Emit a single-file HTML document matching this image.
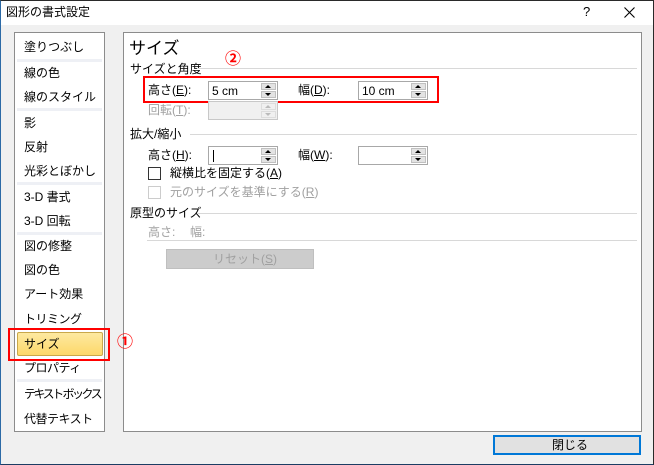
<!DOCTYPE html>
<html><head><meta charset="utf-8"><style>
*{margin:0;padding:0;box-sizing:border-box}
body{width:654px;height:465px;background:#f0f0f0;font-family:"Liberation Sans","Noto Sans CJK JP",sans-serif;font-size:12px;color:#000;position:relative;overflow:hidden}
.frame{position:absolute;left:0;top:0;width:654px;height:465px;border:1px solid #2a2a2a;border-left-color:#2c6aa6;border-bottom-color:#1c3d63}
.title{position:absolute;left:1px;top:1px;width:652px;height:24px;background:#fff}
.a{position:absolute;white-space:nowrap;line-height:14px}
.left{position:absolute;left:14px;top:32px;width:91px;height:400px;background:#fff;border:1px solid #8c8c8c}
.sep{position:absolute;left:2px;width:85px;height:3px;background:#eef0f5}
.right{position:absolute;left:123px;top:32px;width:519px;height:400px;background:#fff;border:1px solid #8c8c8c}
.line{position:absolute;height:1px;background:#d8d8d8}
.inp{position:absolute;width:70px;height:19px;border:1px solid #a8a8a8;background:#fff}
.inp.dis{background:#f0f0f0;border-color:#c8c8c8}
.spin{position:absolute;right:1px;top:1px;width:15px;height:15px}
.spin div{height:7px;background:#e3e3e3;border:1px solid #c0c0c0;margin-bottom:1px;position:relative}
.up:after{content:"";position:absolute;left:3px;top:1px;border-left:3.5px solid transparent;border-right:3.5px solid transparent;border-bottom:3px solid #000}
.dn:after{content:"";position:absolute;left:3px;top:1px;border-left:3.5px solid transparent;border-right:3.5px solid transparent;border-top:3px solid #000}
.dis .up:after{border-bottom-color:#bbb}.dis .dn:after{border-top-color:#bbb}
.dis .spin div{background:#f0f0f0;border-color:#ddd}
.g{color:#a0a0a0}
u{text-decoration:underline}
.red{color:#f00;font-weight:bold;z-index:5}
</style></head><body>
<div class="frame"></div>
<div class="title"></div>
<div class="a" style="left:6px;top:5px;font-size:12px">図形の書式設定</div>
<div class="a" style="left:583px;top:5px;font-size:13px">?</div>
<svg style="position:absolute;left:624px;top:7px" width="11" height="11"><path d="M0.5 0.5L10.5 10.5M10.5 0.5L0.5 10.5" stroke="#000" stroke-width="1.1"/></svg>

<div class="left">
<div class="a" style="left:9px;top:7px">塗りつぶし</div>
<div class="sep" style="top:26px"></div>
<div class="a" style="left:9px;top:33px">線の色</div>
<div class="a" style="left:9px;top:57px">線のスタイル</div>
<div class="sep" style="top:75px"></div>
<div class="a" style="left:9px;top:83px">影</div>
<div class="a" style="left:9px;top:107px">反射</div>
<div class="a" style="left:9px;top:131px">光彩とぼかし</div>
<div class="sep" style="top:149px"></div>
<div class="a" style="left:9px;top:157px">3-D 書式</div>
<div class="a" style="left:9px;top:181px">3-D 回転</div>
<div class="sep" style="top:199px"></div>
<div class="a" style="left:9px;top:206px">図の修整</div>
<div class="a" style="left:9px;top:230px">図の色</div>
<div class="a" style="left:9px;top:254px">アート効果</div>
<div class="a" style="left:9px;top:279px;letter-spacing:-0.5px">トリミング</div>
<div style="position:absolute;left:2px;top:299px;width:86px;height:24px;border:1px solid #c9a84a;border-radius:2px;background:linear-gradient(#fde9a0,#fdd86a)"></div>
<div class="a" style="left:9px;top:304px">サイズ</div>
<div class="a" style="left:9px;top:328px;letter-spacing:-0.5px">プロパティ</div>
<div class="sep" style="top:346px"></div>
<div class="a" style="left:9px;top:354px;letter-spacing:-2.5px">テキスト ボックス</div>
<div class="a" style="left:9px;top:379px;letter-spacing:-0.5px">代替テキスト</div>
</div>
<div style="position:absolute;left:8px;top:328px;width:102px;height:33px;border:2px solid #f00"></div>

<div class="right"></div>
<div class="a red" style="left:117px;top:334px;font-size:16px;line-height:17px">①</div>
<div class="a" style="left:129px;top:40px;font-size:17px;line-height:18px">サイズ</div>
<div class="a red" style="left:225px;top:51px;font-size:16px;line-height:17px">②</div>
<div class="a" style="left:130px;top:62px">サイズと角度</div>
<div class="line" style="left:197px;top:68px;width:440px"></div>
<div style="position:absolute;left:143px;top:76px;width:296px;height:27px;border:2px solid #f00"></div>
<div class="a" style="left:148px;top:83px">高さ(<u>E</u>):</div>
<div class="inp" style="left:208px;top:81px"><span class="a" style="left:3px;top:2px">5 cm</span><div class="spin"><div class="up"></div><div class="dn"></div></div></div>
<div class="a" style="left:298px;top:83px">幅(<u>D</u>):</div>
<div class="inp" style="left:358px;top:81px"><span class="a" style="left:3px;top:2px">10 cm</span><div class="spin"><div class="up"></div><div class="dn"></div></div></div>
<div class="a g" style="left:148px;top:103px">回転(<u>T</u>):</div>
<div class="inp dis" style="left:208px;top:101px"><div class="spin"><div class="up"></div><div class="dn"></div></div></div>

<div class="a" style="left:130px;top:127px">拡大/縮小</div>
<div class="line" style="left:190px;top:134px;width:447px"></div>
<div class="a" style="left:148px;top:148px">高さ(<u>H</u>):</div>
<div class="inp" style="left:208px;top:146px"><span style="position:absolute;left:4px;top:3px;width:1px;height:12px;background:#000"></span><div class="spin"><div class="up"></div><div class="dn"></div></div></div>
<div class="a" style="left:298px;top:148px">幅(<u>W</u>):</div>
<div class="inp" style="left:358px;top:146px"><div class="spin"><div class="up"></div><div class="dn"></div></div></div>
<div style="position:absolute;left:148px;top:167px;width:13px;height:13px;border:1px solid #333;background:#fff"></div>
<div class="a" style="left:170px;top:166px">縦横比を固定する(<u>A</u>)</div>
<div style="position:absolute;left:148px;top:186px;width:13px;height:13px;border:1px solid #ccc;background:#fff"></div>
<div class="a g" style="left:170px;top:185px">元のサイズを基準にする(<u>R</u>)</div>

<div class="a" style="left:130px;top:206px">原型のサイズ</div>
<div class="line" style="left:197px;top:213px;width:440px"></div>
<div class="a g" style="left:148px;top:225px">高さ:</div>
<div class="a g" style="left:190px;top:225px">幅:</div>
<div class="line" style="left:147px;top:240px;width:490px"></div>
<div style="position:absolute;left:166px;top:249px;width:148px;height:20px;background:#ccc;border:1px solid #bfbfbf"></div>
<div class="a g" style="left:213px;top:252px">リセット(<u>S</u>)</div>

<div style="position:absolute;left:493px;top:435px;width:148px;height:20px;background:#e1e1e1;border:2px solid #0078d7"></div>
<div class="a" style="left:552px;top:438px">閉じる</div>
</body></html>
